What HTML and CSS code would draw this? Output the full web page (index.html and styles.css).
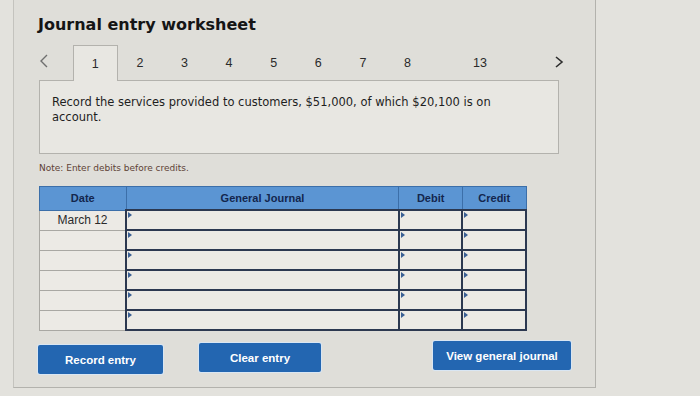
FILE: index.html
```html
<!DOCTYPE html>
<html lang="en">
<head>
  <meta charset="UTF-8" />
  <meta name="viewport" content="width=device-width, initial-scale=1.0"/>
  <title>Journal entry worksheet</title>
  <link rel="stylesheet" href="styles.css">
</head>
<body>
  <div class="panel">
    <h1 class="title">Journal entry worksheet</h1>

    <nav class="tabs">
      <span class="arrow prev">
        <svg width="10" height="14" viewBox="0 0 10 14"><path d="M8 1 L2 7 L8 13" fill="none" stroke="#6f6f6f" stroke-width="1.4"/></svg>
      </span>
      <span class="tab active">1</span>
      <span class="tab">2</span>
      <span class="tab">3</span>
      <span class="tab">4</span>
      <span class="tab">5</span>
      <span class="tab">6</span>
      <span class="tab">7</span>
      <span class="tab">8</span>
      <span class="tab last">13</span>
      <span class="arrow next">
        <svg width="10" height="14" viewBox="0 0 10 14"><path d="M2 2 L8 7 L2 12" fill="none" stroke="#2e2e2e" stroke-width="1.6"/></svg>
      </span>
    </nav>

    <div class="question">
      Record the services provided to customers, $51,000, of which $20,100 is on account.
    </div>

    <p class="note">Note: Enter debits before credits.</p>

    <table class="journal">
      <thead>
        <tr>
          <th class="col-date">Date</th>
          <th class="col-acct">General Journal</th>
          <th class="col-num">Debit</th>
          <th class="col-num">Credit</th>
        </tr>
      </thead>
      <tbody>
        <tr>
          <td class="date">March 12</td>
          <td class="input"></td>
          <td class="input"></td>
          <td class="input"></td>
        </tr>
        <tr><td class="date"></td><td class="input"></td><td class="input"></td><td class="input"></td></tr>
        <tr><td class="date"></td><td class="input"></td><td class="input"></td><td class="input"></td></tr>
        <tr><td class="date"></td><td class="input"></td><td class="input"></td><td class="input"></td></tr>
        <tr><td class="date"></td><td class="input"></td><td class="input"></td><td class="input"></td></tr>
        <tr><td class="date"></td><td class="input"></td><td class="input"></td><td class="input"></td></tr>
      </tbody>
    </table>

    <div class="actions">
      <button class="btn record">Record entry</button>
      <button class="btn clear">Clear entry</button>
      <button class="btn view">View general journal</button>
    </div>
  </div>
</body>
</html>
```

FILE: styles.css
```css
:root {
  --page: #e3e2dd;
  --panel: #dfded9;
  --box: #e8e7e2;
  --line: #b3b2ad;
  --head: #5b95d3;
  --head-line: #3c6fa9;
  --cell-line: #2c3850;
  --btn: #2366b1;
}

body {
  margin: 0;
  background-color: var(--page);
  font-family: "DejaVu Sans", Verdana, sans-serif;
  color: #1c1c1c;
}

.panel {
  margin-left: 13px;
  width: 583px;
  height: 388px;
  box-sizing: border-box;
  padding: 0 0 0 24px;
  background-color: var(--panel);
  border-left: 1px solid #c4c3be;
  border-right: 1px solid var(--line);
  border-bottom: 1px solid var(--line);
}

.title {
  margin: 0;
  padding-top: 14px;
  font-size: 16px;
  font-weight: bold;
  line-height: 22px;
  color: #151515;
}

.tabs {
  display: flex;
  align-items: stretch;
  width: 527px;
  height: 35px;
  margin-top: 9px;
  font-family: "Liberation Sans", Arial, sans-serif;
  font-size: 12.5px;
  color: #2a2a2a;
}

.arrow {
  display: flex;
  align-items: center;
  justify-content: center;
  padding-bottom: 4px;
}

.arrow.prev {
  width: 34px;
  justify-content: flex-start;
  padding-left: 1px;
}

.arrow.next {
  margin-left: auto;
  width: 12px;
  padding-bottom: 2px;
}

.tab {
  width: 44.6px;
  display: flex;
  align-items: center;
  justify-content: center;
  padding-top: 1px;
}

.tab.active {
  background-color: var(--box);
  border: 1px solid var(--line);
  border-bottom: none;
  box-sizing: border-box;
  position: relative;
  z-index: 1;
  margin-bottom: -1px;
}

.tab.last {
  margin-left: 28px;
}

.question {
  width: 520px;
  height: 74px;
  box-sizing: border-box;
  margin-left: 1px;
  padding: 14px 56px 0 12px;
  background-color: var(--box);
  border: 1px solid var(--line);
  font-size: 11.5px;
  line-height: 15px;
  color: #1e1e1e;
}

.note {
  margin: 8px 0 0 1px;
  font-size: 9px;
  line-height: 12px;
  color: #5e4236;
}

.journal {
  margin-top: 12px;
  margin-left: 1px;
  width: 488px;
  border-collapse: collapse;
  table-layout: fixed;
  font-family: "Liberation Sans", Arial, sans-serif;
}

.journal th {
  height: 22px;
  padding: 0;
  background-color: var(--head);
  border: 1px solid var(--head-line);
  font-size: 11px;
  font-weight: bold;
  color: #13264d;
}

.col-date { width: 85.5px; }
.col-acct { width: 271.5px; }
.col-num { width: 62.5px; }

.journal td {
  height: 18px;
  padding: 0;
  background-color: #eceae5;
}

.journal td.date {
  border: 1px solid #a9a8a3;
  text-align: center;
  font-size: 12px;
  color: #2a2a2a;
}

.journal td.input {
  border: 2px solid var(--cell-line);
  position: relative;
}

.journal td.input::before {
  content: "";
  position: absolute;
  top: 1px;
  left: 1px;
  border-top: 3px solid transparent;
  border-bottom: 3px solid transparent;
  border-left: 4px solid #3a5f94;
}

.actions {
  display: flex;
  align-items: flex-start;
  margin-top: 12px;
}

.btn {
  height: 29px;
  border: none;
  border-radius: 2px;
  background-color: var(--btn);
  color: white;
  font-family: "Liberation Sans", Arial, sans-serif;
  font-size: 11.5px;
  font-weight: bold;
  cursor: pointer;
  box-shadow: 0 0 0 1px #d9e6f3;
}

.btn.record {
  width: 125px;
  margin-top: 2px;
}

.btn.clear {
  width: 122px;
  margin-left: 36px;
}

.btn.view {
  width: 138px;
  margin-left: 112px;
  margin-top: -2px;
}
```
